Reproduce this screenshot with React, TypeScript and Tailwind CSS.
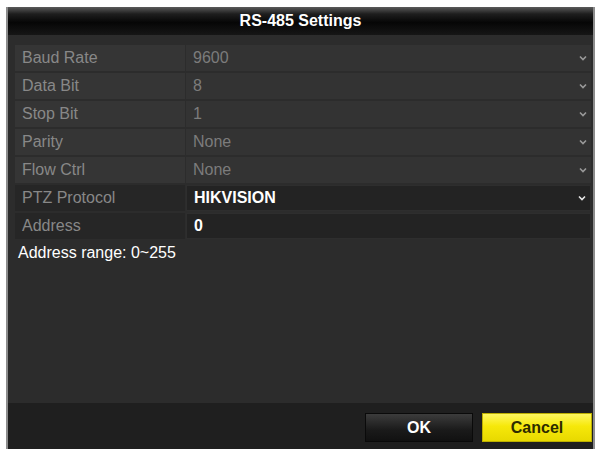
import React from "react";

type Row = { label: string; value: string; enabled?: boolean; select?: boolean };

const rows: Row[] = [
  { label: "Baud Rate", value: "9600", select: true },
  { label: "Data Bit", value: "8", select: true },
  { label: "Stop Bit", value: "1", select: true },
  { label: "Parity", value: "None", select: true },
  { label: "Flow Ctrl", value: "None", select: true },
  { label: "PTZ Protocol", value: "HIKVISION", enabled: true, select: true },
  { label: "Address", value: "0", enabled: true },
];

function Chevron({ bright }: { bright?: boolean }) {
  return (
    <svg width="8" height="6" viewBox="0 0 8 6" className="shrink-0">
      <polyline
        points="1,1.5 4,4.5 7,1.5"
        fill="none"
        stroke={bright ? "#e6e6e6" : "#9a9a9a"}
        strokeWidth="1.6"
      />
    </svg>
  );
}

export default function App() {
  return (
    <div
      className="w-[598px] h-[449px] bg-white pt-[7px] pl-[6px] pr-[3px] flex overflow-hidden"
      style={{ fontFamily: '"Liberation Sans", Arial, sans-serif' }}
    >
      <div className="flex-1 flex flex-col border-l-2 border-r-2 border-[#8c8c8c] bg-[#2c2c2c]">
        {/* Title */}
        <div className="h-[28px] shrink-0 flex items-center justify-center bg-[linear-gradient(to_bottom,#5a5a5a_0%,#1e1e1e_25%,#060606_55%,#161616_100%)]">
          <span className="text-white font-bold text-[16px] leading-none">RS-485 Settings</span>
        </div>

        {/* Body */}
        <div className="flex-1 flex flex-col pt-[10px] pl-[7px] pr-[2px]">
          <div className="flex flex-col gap-[2px]">
            {rows.map(r => (
              <div key={r.label} className="h-[26px] flex gap-[1px]">
                <div
                  className={
                    "w-[170px] shrink-0 flex items-center pl-[7px] text-[16px] text-[#888888] " +
                    (r.enabled ? "bg-[#262626]" : "bg-[#353535]")
                  }
                >
                  {r.label}
                </div>
                <div
                  className={
                    "flex-1 flex items-center justify-between pl-[7px] pr-[4px] text-[16px] " +
                    (r.enabled
                      ? "bg-[#232323] text-white font-bold border border-[#2e2e2e]"
                      : "bg-[#333333] text-[#7c7c7c]")
                  }
                >
                  <span>{r.value}</span>
                  {r.select && <Chevron bright={r.enabled} />}
                </div>
              </div>
            ))}
          </div>
          <div className="mt-[4px] ml-[3px] text-[16px] text-white leading-[20px]">
            Address range: 0~255
          </div>
        </div>

        {/* Footer */}
        <div className="h-[46px] shrink-0 bg-[#1f1f1f] flex items-start justify-end gap-[9px] pt-[10px] pr-[1px]">
          <button className="w-[108px] h-[29px] border border-[#0a0a0a] bg-[linear-gradient(to_bottom,#3c3c3c,#1a1a1a_60%,#111111)] text-white font-bold text-[16px] leading-none">
            OK
          </button>
          <button className="w-[110px] h-[29px] border border-[#bdb000] bg-[linear-gradient(to_bottom,#fff860,#f6e80a_45%,#e8d900)] text-[#2e2c00] font-bold text-[16px] leading-none">
            Cancel
          </button>
        </div>
      </div>
    </div>
  );
}
